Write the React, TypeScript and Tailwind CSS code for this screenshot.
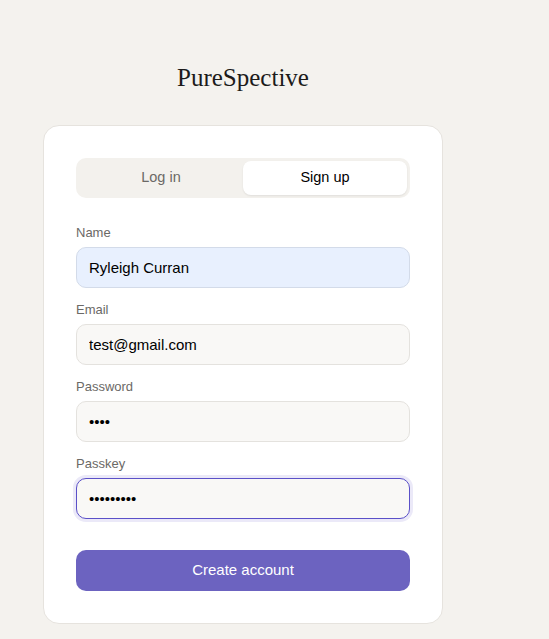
import { useState } from 'react'

const inputBase =
  'block w-full h-[41px] rounded-[10px] border px-3 text-[15px] text-black outline-none font-[Liberation_Sans,Arial,sans-serif]'

function Field({
  label,
  type = 'text',
  defaultValue,
  className,
  autoFocus,
}: {
  label: string
  type?: string
  defaultValue: string
  className: string
  autoFocus?: boolean
}) {
  return (
    <div>
      <label className="block mb-[5px] text-[13px] leading-[18px] text-[#6b6966]">{label}</label>
      <input type={type} defaultValue={defaultValue} autoFocus={autoFocus} className={`${inputBase} ${className}`} />
    </div>
  )
}

export default function App() {
  const [tab, setTab] = useState<'login' | 'signup'>('signup')

  return (
    <div className="min-h-[639px] bg-[#f4f2ee] pt-[62px] pl-[43px] font-['Liberation_Sans',Arial,sans-serif]">
      <div className="w-[400px]">
        <h1 className="text-center text-[25px] leading-[32px] text-[#1c1b1a] font-['Liberation_Serif','Times_New_Roman',serif]">
          PureSpective
        </h1>

        <div className="mt-[31px] rounded-[16px] border border-[#e6e3de] bg-white px-[32px] pt-[32px] pb-[32px]">
          {/* Tabs */}
          <div className="flex h-[40px] rounded-[10px] bg-[#f3f1ed] p-[3px]">
            <button
              onClick={() => setTab('login')}
              className={`flex-1 rounded-[8px] text-[14.5px] ${
                tab === 'login' ? 'bg-white text-black shadow-[0_1px_2px_rgba(0,0,0,0.08)]' : 'text-[#6b6966]'
              }`}
            >
              Log in
            </button>
            <button
              onClick={() => setTab('signup')}
              className={`flex-1 rounded-[8px] text-[14.5px] ${
                tab === 'signup' ? 'bg-white text-black shadow-[0_1px_2px_rgba(0,0,0,0.08)]' : 'text-[#6b6966]'
              }`}
            >
              Sign up
            </button>
          </div>

          <div className="mt-[26px] flex flex-col gap-[13px]">
            <Field label="Name" defaultValue="Ryleigh Curran" className="border-[#d3dbe9] bg-[#e8f0fe]" />
            <Field label="Email" defaultValue="test@gmail.com" className="border-[#e4e2de] bg-[#f9f8f6]" />
            <Field label="Password" type="password" defaultValue="1234" className="border-[#e4e2de] bg-[#f9f8f6]" />
            <Field
              label="Passkey"
              type="password"
              defaultValue="123456789"
              autoFocus
              className="border-[#5b50c8] bg-[#f9f8f6] ring-[3px] ring-[#ebe9f8]"
            />
          </div>

          <button className="mt-[31px] block h-[41px] w-full rounded-[10px] bg-[#6c63c0] text-[15px] text-white">
            Create account
          </button>
        </div>
      </div>
    </div>
  )
}
